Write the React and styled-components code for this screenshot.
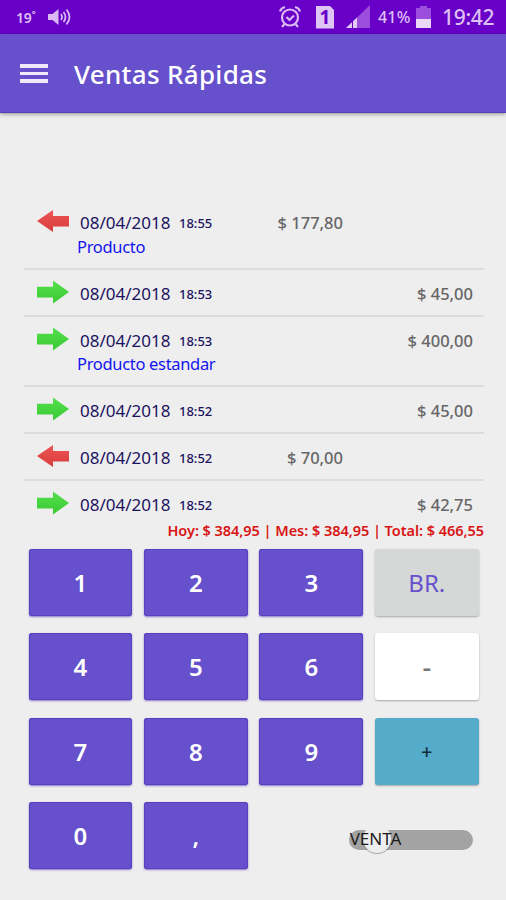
import React, { useState } from "react";
import styled, { createGlobalStyle } from "styled-components";

const sales = [
	{ type: "out", date: "08/04/2018", time: "18:55", amount: "$ 177,80", product: "Producto" },
	{ type: "in", date: "08/04/2018", time: "18:53", amount: "$ 45,00" },
	{ type: "in", date: "08/04/2018", time: "18:53", amount: "$ 400,00", product: "Producto estandar" },
	{ type: "in", date: "08/04/2018", time: "18:52", amount: "$ 45,00" },
	{ type: "out", date: "08/04/2018", time: "18:52", amount: "$ 70,00" },
	{ type: "in", date: "08/04/2018", time: "18:52", amount: "$ 42,75" },
];

const keys = ["1", "2", "3", "BR.", "4", "5", "6", "-", "7", "8", "9", "+", "0", ","];

const variants = { "BR.": "clear", "-": "minus", "+": "plus" };

const Arrow = ({ type }) => (
	<svg width="34" height="24" viewBox="0 0 34 24">
		<defs>
			<linearGradient id={`arrow-${type}`} x1="0" y1="0" x2="0" y2="1">
				<stop offset="0" stopColor={type === "in" ? "#55e04e" : "#ee5555"} />
				<stop offset="1" stopColor={type === "in" ? "#38c932" : "#d93c3c"} />
			</linearGradient>
		</defs>
		<path
			d={
				type === "in"
					? "M1 6.8H17V0.5L33 12 17 23.5V17.6H1Z"
					: "M33 7H17V1L1 12 17 23V17.4H33Z"
			}
			fill={`url(#arrow-${type})`}
		/>
	</svg>
);

const VolumeIcon = () => (
	<svg width="24" height="18" viewBox="0 0 24 18" fill="none" stroke="#d9b8f4">
		<path d="M0 6h4.5l6-5v16l-6-5H0Z" fill="#d9b8f4" stroke="none" />
		<path d="M13 6q2 3 0 6M15.5 4q4 5 0 10M18.5 1.5q6 7.5 0 15" strokeWidth="1.8" />
	</svg>
);

const AlarmIcon = () => (
	<svg width="22" height="24" viewBox="0 0 22 24" fill="none" stroke="#d9b8f4" strokeWidth="2.2">
		<circle cx="11" cy="12.5" r="8" />
		<path d="M7.5 12l3 3 4.5-4.5M1 6.5Q2 3 6 2M21 6.5Q20 3 16 2M5.5 19L3 22M16.5 19L19 22" />
	</svg>
);

const SignalIcon = () => (
	<svg width="24" height="24" viewBox="0 0 24 24">
		<path d="M24 0V23H0Z" fill="#9a4edb" />
		<path d="M11 12.5V23H0Z" fill="#e3ccf7" />
		<path d="M6.5 15V23" stroke="#6800c8" strokeWidth="1" />
	</svg>
);

const BatteryIcon = () => (
	<svg width="15" height="22" viewBox="0 0 15 22">
		<path d="M4 0h7v2h4v11H0V2h4Z" fill="#9a4edb" />
		<path d="M0 13h15v9H0Z" fill="#ead8f9" />
	</svg>
);

export default function App() {
	const [input, setInput] = useState("");

	return (
		<Screen>
			<GlobalStyle />
			<StatusBar>
				<Temperature>19˚</Temperature>
				<VolumeIcon />
				<StatusRight>
					<AlarmIcon />
					<Sim>1</Sim>
					<SignalIcon />
					<Percent>41%</Percent>
					<BatteryIcon />
					<Clock>19:42</Clock>
				</StatusRight>
			</StatusBar>
			<AppBar>
				<Menu aria-label="Menú">
					<i />
					<i />
					<i />
				</Menu>
				<Title>Ventas Rápidas</Title>
			</AppBar>
			<List>
				{sales.map((sale, i) => (
					<Sale key={i} $tall={!!sale.product}>
						<Line>
							<Arrow type={sale.type} />
							<DateText>{sale.date}</DateText>
							<Time>{sale.time}</Time>
							<Amount $out={sale.type === "out"}>{sale.amount}</Amount>
						</Line>
						{sale.product && <Product>{sale.product}</Product>}
					</Sale>
				))}
			</List>
			<Totals>Hoy: $ 384,95 | Mes: $ 384,95 | Total: $ 466,55</Totals>
			<Keypad>
				{keys.map((key) => (
					<Key
						key={key}
						$variant={variants[key]}
						onClick={() => setInput(key === "BR." ? "" : input + key)}
					>
						{key}
					</Key>
				))}
				<SwitchCell>
					<Track>
						<Thumb />
						<SwitchLabel>VENTA</SwitchLabel>
					</Track>
				</SwitchCell>
			</Keypad>
		</Screen>
	);
}

const GlobalStyle = createGlobalStyle`
	* {
		box-sizing: border-box;
	}

	body {
		margin: 0;
		background: #eeeeee;
		font-family: "Noto Sans", "Open Sans", sans-serif;
	}
`;

const Screen = styled.div`
	width: 506px;
	height: 900px;
	display: flex;
	flex-direction: column;
	overflow: hidden;
	background: #eeeeee;
`;

const StatusBar = styled.div`
	height: 34px;
	flex: none;
	display: flex;
	align-items: center;
	padding: 0 11px 0 16px;
	background: #6800c8;
	color: #dcc0f5;
`;

const Temperature = styled.span`
	width: 32px;
	font-size: 14px;
	font-weight: 600;
	letter-spacing: -0.3px;
`;

const StatusRight = styled.div`
	margin-left: auto;
	display: flex;
	align-items: center;
`;

const Sim = styled.div`
	width: 18px;
	height: 23px;
	margin: 0 12px 0 15px;
	display: flex;
	align-items: center;
	justify-content: center;
	background: #dfc4f6;
	clip-path: polygon(0 0, 75% 0, 100% 20%, 100% 100%, 0 100%);
	color: #6800c8;
	font-size: 19px;
	font-weight: 700;
`;

const Percent = styled.span`
	width: 38px;
	margin-left: 8px;
	font-size: 16px;
	font-weight: 500;
	letter-spacing: 0.2px;
`;

const Clock = styled.span`
	width: 53px;
	margin-left: 11px;
	font-size: 21px;
	font-weight: 500;
	letter-spacing: -0.3px;
	white-space: nowrap;
`;

const AppBar = styled.header`
	height: 79px;
	flex: none;
	display: flex;
	align-items: center;
	padding: 0 20px;
	background: #6650cb;
	box-shadow: inset 0 -1px #5640b8, 0 1px 4px rgba(0, 0, 0, 0.4);
`;

const Menu = styled.button`
	width: 28px;
	padding: 0;
	border: 0;
	display: grid;
	gap: 4px;
	background: none;

	i {
		height: 3.5px;
		background: #eeeafa;
	}
`;

const Title = styled.h1`
	margin: 0 0 0 26px;
	color: #ffffff;
	font-size: 26px;
	font-weight: 500;
	letter-spacing: 0.3px;
	white-space: nowrap;
`;

const List = styled.div`
	height: 406px;
	flex: none;
	padding: 84.6px 22px 0 24px;
`;

const Sale = styled.div`
	height: ${({ $tall }) => ($tall ? "70.5px" : "46.7px")};
	padding: 10.4px 11px 0 12px;

	& + & {
		border-top: 2px solid #dcdcdc;
		padding-top: 8.4px;
	}
`;

const Line = styled.div`
	height: 30px;
	display: flex;
	align-items: center;

	svg {
		margin-top: -3px;
	}
`;

const DateText = styled.span`
	width: 99px;
	margin-left: 10px;
	color: #1b1260;
	font-size: 17px;
`;

const Time = styled.span`
	margin-top: 1px;
	color: #1b1260;
	font-size: 13px;
	font-weight: 500;
`;

const Amount = styled.span`
	margin-left: auto;
	margin-right: ${({ $out }) => ($out ? "130px" : "0")};
	color: #666666;
	font-size: 16.5px;
	font-weight: 500;
`;

const Product = styled.div`
	margin: -3px 0 0 41px;
	color: #1414f0;
	font-size: 16.5px;
	letter-spacing: -0.32px;
	line-height: 24px;
`;

const Totals = styled.div`
	height: 23px;
	padding-right: 22px;
	color: #d81414;
	font-size: 14.5px;
	font-weight: 600;
	letter-spacing: -0.04px;
	line-height: 22px;
	text-align: right;
	white-space: nowrap;
`;

const Keypad = styled.div`
	display: grid;
	grid-template-columns: repeat(4, 103.7px);
	grid-auto-rows: 67px;
	gap: 17.4px 11.8px;
	padding: 7px 0 0 28.5px;
`;

const keyColors = {
	clear: "background: #d6d8d7; color: #6650cb; font-weight: 400;",
	minus: "background: #ffffff; color: #777777; font-size: 27px; font-weight: 500;",
	plus: "background: #55acca; color: #122c38; font-size: 20px; font-weight: 500;",
};

const Key = styled.button`
	border: 0;
	border-radius: 3px;
	padding: 0;
	background: #6650cb;
	box-shadow: 0 1px 2px rgba(0, 0, 0, 0.3);
	color: #ffffff;
	font-family: inherit;
	font-size: 24px;
	font-weight: 600;
	${({ $variant }) =>
		$variant ? keyColors[$variant] : "box-shadow: inset 0 0 0 1px #5840be, 0 1px 2px rgba(70, 40, 180, 0.6);"}
`;

const SwitchCell = styled.div`
	grid-column: 3 / 5;
	display: flex;
	align-items: center;
	justify-content: flex-end;
	padding: 9px 6px 0 0;
`;

const Track = styled.div`
	position: relative;
	width: 124px;
	height: 20px;
	border-radius: 10px;
	background: #a3a3a3;
`;

const Thumb = styled.div`
	position: absolute;
	top: -5px;
	left: 14px;
	width: 28px;
	height: 28px;
	border-radius: 50%;
	background: #eeeeee;
	box-shadow: 0 1px 1px rgba(0, 0, 0, 0.3);
`;

const SwitchLabel = styled.span`
	position: absolute;
	top: -1px;
	left: 1px;
	color: #1c1c1c;
	font-size: 17px;
	line-height: 20px;
`;
